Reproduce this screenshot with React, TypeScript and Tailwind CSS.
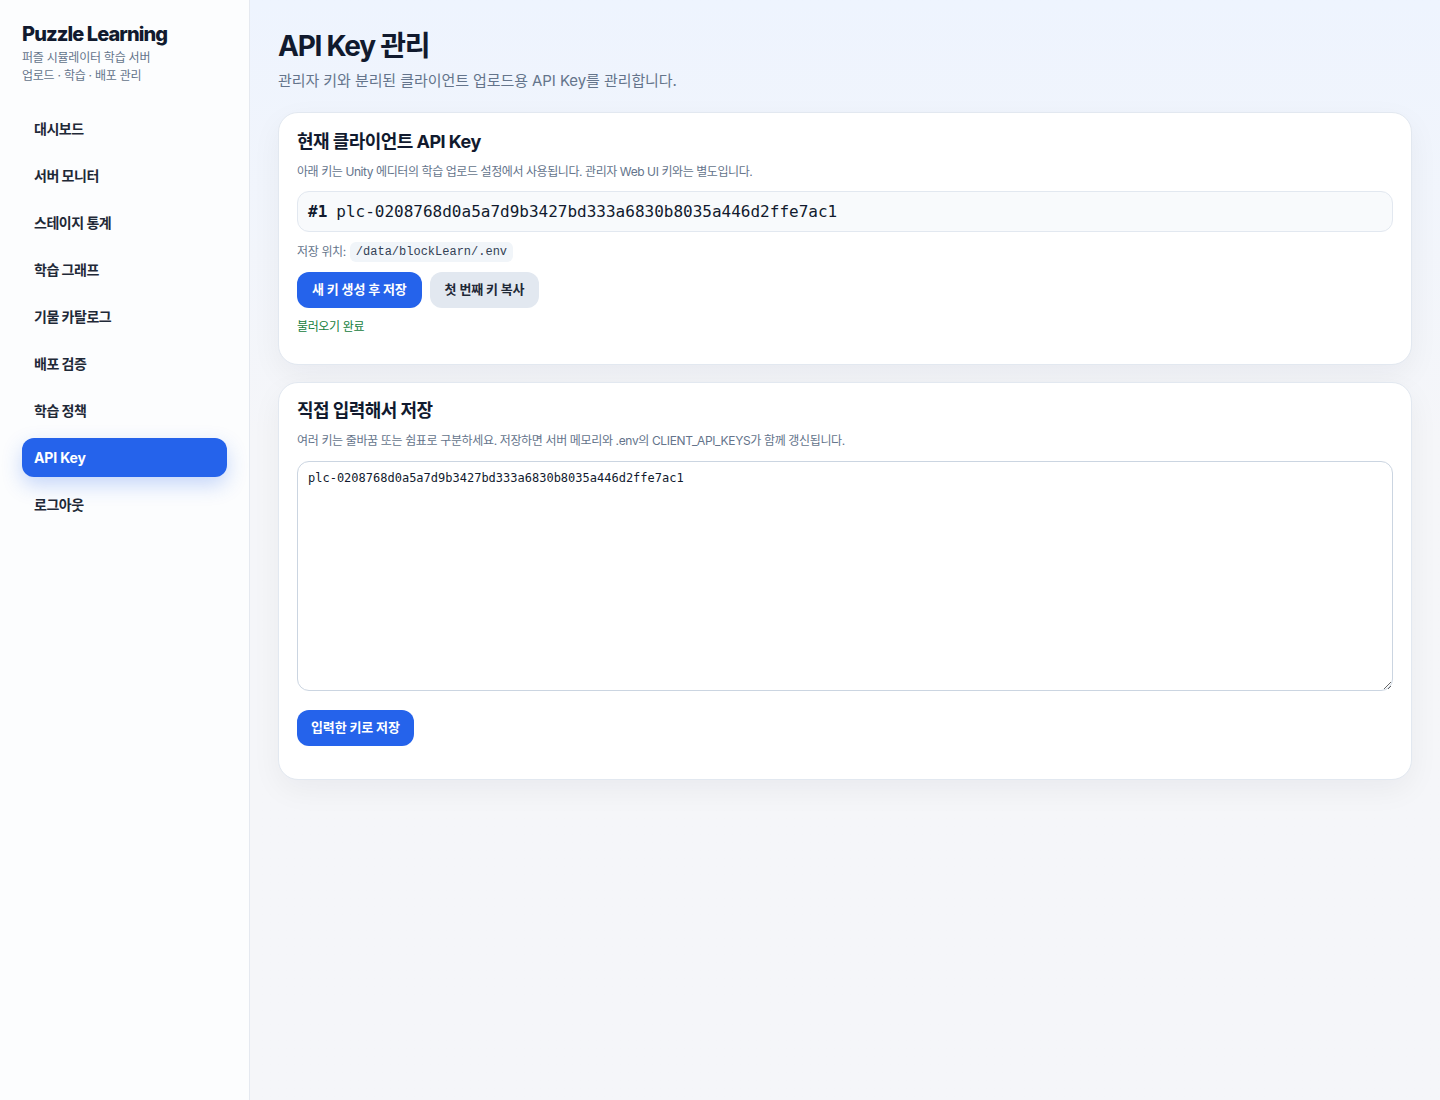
import React from 'react';

const navItems = [
  '대시보드',
  '서버 모니터',
  '스테이지 통계',
  '학습 그래프',
  '기물 카탈로그',
  '배포 검증',
  '학습 정책',
  'API Key',
  '로그아웃',
];

const apiKey = 'plc-0208768d0a5a7d9b3427bd333a6830b8035a446d2ffe7ac1';

const sans = "font-['Inter','Noto_Sans_CJK_KR',sans-serif]";
const mono = "font-['DejaVu_Sans_Mono',monospace]";

export default function App() {
  return (
    <div className={`flex min-h-screen ${sans} text-slate-900`}>
      <aside className="w-[250px] shrink-0 border-r border-[#e5e9f0] bg-[#fcfdfe] px-[22px] pt-[22px]">
        <div className="text-[20px] font-extrabold leading-6 tracking-[-0.045em] text-[#111a2e]">
          Puzzle Learning
        </div>
        <div className="mt-[3px] text-[12px] leading-[18px] tracking-[-0.02em] text-[#64748b]">
          <div>퍼즐 시뮬레이터 학습 서버</div>
          <div>업로드 · 학습 · 배포 관리</div>
        </div>
        <nav className="mt-[24px] flex flex-col gap-2">
          {navItems.map((item) => {
            const active = item === 'API Key';
            return (
              <div
                key={item}
                className={
                  active
                    ? 'flex h-[39px] items-center rounded-xl bg-[#2563eb] px-3 text-[14px] font-bold tracking-[-0.01em] text-white shadow-[0_8px_20px_rgba(37,99,235,0.25)]'
                    : 'flex h-[39px] items-center rounded-xl px-3 text-[14px] font-bold tracking-[-0.035em] text-[#1f2937]'
                }
              >
                {item}
              </div>
            );
          })}
        </nav>
      </aside>

      <main className="flex-1 bg-gradient-to-b from-[#eef4fe] to-[#f5f6f9] to-40% px-7 pt-[29px]">
        <h1 className="text-[28px] font-bold leading-[34px] tracking-[-0.045em] text-[#111a2e]">API Key 관리</h1>
        <p className="mt-[7px] text-[15px] leading-[22px] tracking-[-0.005em] text-[#64748b]">
          관리자 키와 분리된 클라이언트 업로드용 API Key를 관리합니다.
        </p>

        <section className="mt-[20px] rounded-[20px] border border-[#e2e8f0] bg-white px-[18px] pb-[28px] pt-[19px] shadow-[0_10px_30px_rgba(15,23,42,0.05)]">
          <h2 className="text-[18px] font-bold leading-5 tracking-[-0.03em] text-[#111a2e]">현재 클라이언트 API Key</h2>
          <p className="mt-[11px] text-[12px] leading-[18px] tracking-[-0.035em] text-[#64748b]">
            아래 키는 Unity 에디터의 학습 업로드 설정에서 사용됩니다. 관리자 Web UI 키와는 별도입니다.
          </p>
          <div className={`mt-[10px] flex h-[41px] items-center rounded-xl border border-[#e2e8f0] bg-[#f8fafc] px-[10px] text-[16px] text-[#111a2e] ${mono}`}>
            <span className="font-bold">#1</span>
            <span className="ml-[9px]">{apiKey}</span>
          </div>
          <div className="mt-[10px] flex items-center gap-1 text-[12px] leading-[18px] tracking-[-0.03em] text-[#64748b]">
            <span>저장 위치:</span>
            <code className="rounded-md bg-[#f1f5f9] px-[6px] py-[1px] font-['Liberation_Mono','Courier_New',monospace] text-[12px] tracking-normal text-[#334155]">
              /data/blockLearn/.env
            </code>
          </div>
          <div className="mt-[10px] flex gap-2">
            <button className="h-9 rounded-xl bg-[#2563eb] px-[15px] text-[13px] font-bold tracking-[-0.01em] text-white">
              새 키 생성 후 저장
            </button>
            <button className="h-9 rounded-xl bg-[#e2e8f0] px-[15px] text-[13px] font-bold tracking-[-0.01em] text-[#1f2937]">
              첫 번째 키 복사
            </button>
          </div>
          <p className="mt-[10px] text-[12px] leading-[18px] tracking-[-0.03em] text-[#15803d]">불러오기 완료</p>
        </section>

        <section className="mt-[17px] rounded-[20px] border border-[#e2e8f0] bg-white px-[18px] pb-[33px] pt-[18px] shadow-[0_10px_30px_rgba(15,23,42,0.05)]">
          <h2 className="text-[18px] font-bold leading-5 tracking-[-0.03em] text-[#111a2e]">직접 입력해서 저장</h2>
          <p className="mt-[11px] text-[12px] leading-[18px] tracking-[-0.03em] text-[#64748b]">
            여러 키는 줄바꿈 또는 쉼표로 구분하세요. 저장하면 서버 메모리와 .env의 CLIENT_API_KEYS가 함께 갱신됩니다.
          </p>
          <textarea
            defaultValue={apiKey}
            className={`mt-[11px] block h-[230px] w-full rounded-xl border border-[#cbd5e1] bg-white px-[10px] py-[7px] text-[12px] leading-[18px] text-[#111a2e] outline-none ${mono}`}
          />
          <button className="mt-[19px] h-9 rounded-xl bg-[#2563eb] px-[14px] text-[13px] font-bold tracking-[-0.01em] text-white">
            입력한 키로 저장
          </button>
        </section>
      </main>
    </div>
  );
}
